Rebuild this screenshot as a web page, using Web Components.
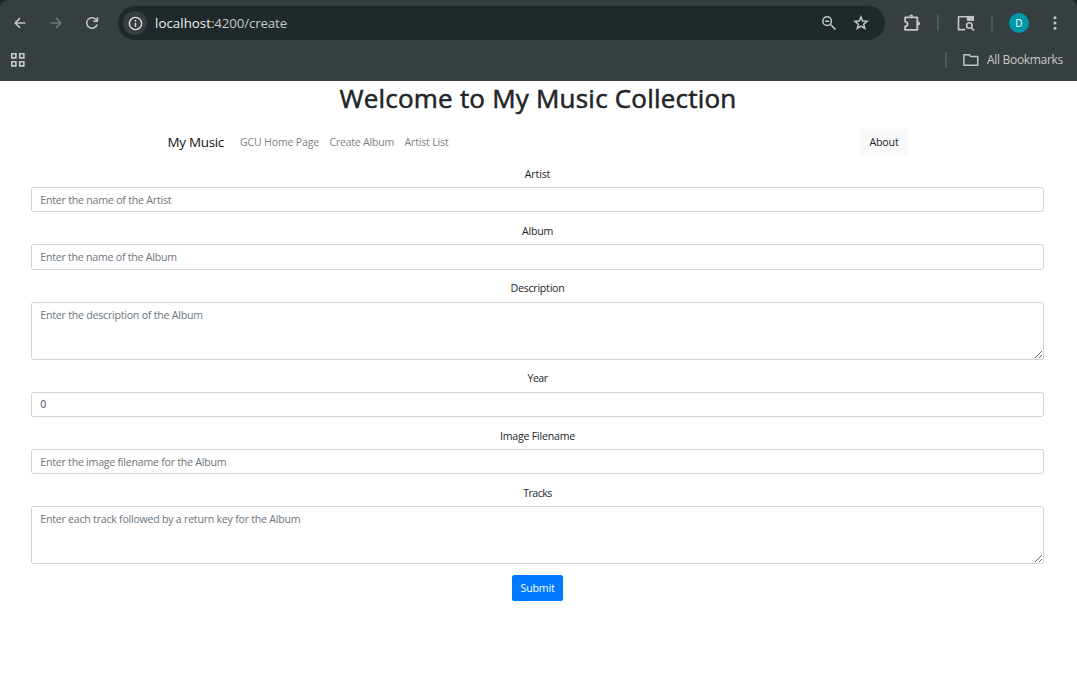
<!DOCTYPE html>
<html lang="en">
<head>
<meta charset="utf-8">
<title>My Music</title>
<style>
body{margin:0;background:#fff;color:#212529;font:10.6px/16px "Open Sans","Noto Sans",sans-serif}
</style>
</head>
<body>
<browser-toolbar></browser-toolbar>
<music-page></music-page>
<script>
const ctx = document.createElement('canvas').getContext('2d');
function spacingFor(el, text, width) {
  const s = getComputedStyle(el);
  ctx.font = `${s.fontWeight} ${s.fontSize} ${s.fontFamily}`;
  return (width - ctx.measureText(text).width) / text.length + 'px';
}
function define(name, html, ready) {
  customElements.define(name, class extends HTMLElement {
    connectedCallback() {
      if (this.shadowRoot) return;
      const t = document.createElement('template');
      t.innerHTML = html;
      this.attachShadow({mode: 'open'}).append(t.content.cloneNode(true));
      if (ready) ready(this, this.shadowRoot);
    }
  });
}

// Text tracked so that it takes the width given in "w".
define('fit-text', `<style>:host{display:inline-block;white-space:nowrap}</style><slot></slot>`, el => {
  const w = +el.getAttribute('w');
  el.style.width = w + 'px';
  el.style.letterSpacing = spacingFor(el, el.textContent, w);
});

define('form-field', `<style>
:host{display:block;margin-bottom:10.67px}
label{display:block;text-align:center;margin-bottom:5.33px;height:16px;color:#212529}
input,textarea{display:block;box-sizing:border-box;width:100%;margin:0;border:1px solid #ced4da;border-radius:2.6px;background:#fff;color:#495057;font:inherit;padding:0 8px 0 8.3px;outline:0}
input{height:25.33px}
textarea{height:58px;padding-top:4px;resize:vertical}
::placeholder{color:#6c757d;opacity:1}
</style><label><slot></slot></label>`, (el, root) => {
  const f = document.createElement(el.hasAttribute('multiline') ? 'textarea' : 'input');
  const hint = el.getAttribute('hint') || '';
  f.placeholder = hint;
  f.value = el.getAttribute('value') || '';
  root.append(f);
  if (hint) f.style.letterSpacing = spacingFor(f, hint, +el.getAttribute('w'));
});

define('app-button', `<style>
:host{display:block;flex:none}
button{display:block;box-sizing:border-box;width:100%;height:26px;border:0;border-radius:2.6px;padding:0;font:inherit;color:#212529;background:#f8f9fa;text-align:center}
:host([primary]) button{background:#007bff;color:#fff}
</style><button><slot></slot></button>`);

define('nav-bar', `<style>
:host{display:flex;align-items:center;height:26px;padding:0 169px 0 167.5px;margin-top:15px}
.brand{font-size:13.4px;color:#111;margin-right:16px}
nav{display:flex;gap:10.5px;color:#7f7f7f;flex:1}
app-button{width:48px}
</style>
<fit-text class="brand" w="56.5">My Music</fit-text>
<nav><fit-text w="79">GCU Home Page</fit-text><fit-text w="64.5">Create Album</fit-text><fit-text w="44">Artist List</fit-text></nav>
<app-button><fit-text w="29">About</fit-text></app-button>`);

define('music-page', `<style>
:host{display:block;padding-top:1px}
h1{margin:0;height:32px;line-height:32px;font-size:26px;font-weight:500;-webkit-text-stroke:.55px #212529;text-align:center;padding-right:1px}
form{padding:0 33px 0 31px;margin-top:10.72px}
app-button.submit{width:51px;margin:0 auto}
</style>
<h1><fit-text w="397">Welcome to My Music Collection</fit-text></h1>
<nav-bar></nav-bar>
<form>
<form-field hint="Enter the name of the Artist" w="131"><fit-text w="25.5">Artist</fit-text></form-field>
<form-field hint="Enter the name of the Album" w="136.5"><fit-text w="31">Album</fit-text></form-field>
<form-field multiline hint="Enter the description of the Album" w="162.5"><fit-text w="54">Description</fit-text></form-field>
<form-field value="0"><fit-text w="20">Year</fit-text></form-field>
<form-field hint="Enter the image filename for the Album" w="186"><fit-text w="75">Image Filename</fit-text></form-field>
<form-field multiline hint="Enter each track followed by a return key for the Album" w="260"><fit-text w="28.5">Tracks</fit-text></form-field>
<app-button primary class="submit"><fit-text w="34">Submit</fit-text></app-button>
</form>`);

const paths = {
  back: '<path d="M19 12H6M12 5.500 5.500 12l6.500 6.500"/>',
  forward: '<path d="M5 12h13M12 5.500 18.500 12 12 18.500"/>',
  reload: '<path d="M18.700 14A7 7 0 1 1 17 7.100L19 9M19.200 4v5.500h-5.700"/>',
  info: '<circle cx="12" cy="12" r="8.700"/><path d="M12 11v5.500M12 7v2"/>',
  zoom: '<circle cx="9.500" cy="9.500" r="5.700"/><path d="m13.700 13.700 6.800 6.800M6.800 9.500h5.400"/>',
  star: '<path stroke-linejoin="miter" d="m12 4 2.250 5.300 5.750.5-4.400 3.800 1.350 5.700L12 16.300l-4.950 3 1.350-5.700L4 9.800l5.750-.5z"/>',
  puzzle: '<path d="M4.500 5.800H17.800V19.500H4.500V15.800c3.600-.6 3.600-4.700 0-5.300z"/><path d="M9 5a2.200 2.200 0 0 1 4.400 0zM18.600 10.300a2.200 2.200 0 0 1 0 4.400z" fill="currentColor" stroke="none"/>',
  tabsearch: '<path d="M11 20H3V4.500H20.500V9"/><path d="M13 3.500h8.500v6H13z" fill="currentColor" stroke="none"/><circle cx="16" cy="15" r="3.300"/><path d="m18.300 17.500 3.400 3.500"/>',
  more: '<g fill="currentColor" stroke="none"><circle cx="12" cy="5" r="2"/><circle cx="12" cy="12" r="2"/><circle cx="12" cy="19" r="2"/></g>',
  apps: '<path stroke-linejoin="miter" stroke-width="2.200" d="M3.700 3.700h5.500v5.500H3.700zM14.300 3.700h5.500v5.500h-5.500zM3.700 14.300h5.500v5.500H3.700zM14.300 14.300h5.500v5.500h-5.500z"/>',
  folder: '<path d="M2.500 5H9.500l2 2.300H21V19H2.500z"/>'
};
define('tool-icon', `<style>:host{display:block;flex:none;width:18px;height:18px;color:#c4c7c5}svg{display:block;width:100%;height:100%;fill:none;stroke:currentColor;stroke-width:2;stroke-linejoin:round}</style><svg viewBox="0 0 24 24"></svg>`, (el, root) => {
  root.querySelector('svg').innerHTML = paths[el.getAttribute('name')];
});

define('browser-toolbar', `<style>
:host{display:block;box-sizing:border-box;height:81px;background:#202729;font-family:"Open Sans","Noto Sans",sans-serif}
.bar{box-sizing:border-box;height:81px;background:#373e41;border-bottom:1px solid #41373e;border-radius:8px 8px 0 0}
.row{display:flex;align-items:center;height:34px;padding:6px 13px 0 11px}
.space{flex:1}
.omni{display:flex;align-items:center;box-sizing:border-box;width:767px;height:34px;margin-left:18px;border-radius:17px;background:#1f282a;padding:0 15px 0 5px;font-size:13.3px;color:#c7cac9}
.info{display:grid;place-items:center;width:24px;height:24px;border-radius:50%;background:#373e41;margin-right:8px}
.info tool-icon{width:17px;height:17px;color:#e3e3e3}
.host{color:#eef0ef}
.sep{width:2px;height:16px;background:#505759}
.avatar{width:20px;height:20px;border-radius:50%;background:#0097a7;color:#fff;font-size:10px;line-height:20px;text-align:center;margin:0 17px 0 16px}
.marks{height:40px;padding:0 14px 0 9px;font-size:12px;color:#c7cac9}
.marks .sep{margin-right:15px}
.marks tool-icon{margin-right:7px}
</style>
<div class="bar">
<div class="row">
<tool-icon name="back"></tool-icon><tool-icon name="forward" style="color:#747a7b;margin-left:18px"></tool-icon><tool-icon name="reload" style="margin-left:18px;margin-right:-1px"></tool-icon>
<div class="omni"><div class="info"><tool-icon name="info"></tool-icon></div><fit-text class="host" w="56">localhost</fit-text><fit-text w="76">:4200/create</fit-text><span class="space"></span><tool-icon name="zoom" style="margin-right:14px"></tool-icon><tool-icon name="star"></tool-icon></div>
<tool-icon name="puzzle" style="margin:0 14px 0 16px;width:22px;height:22px"></tool-icon><span class="sep"></span>
<tool-icon name="tabsearch" style="margin:0 15.500px 0 16.500px;width:20px;height:20px"></tool-icon><span class="sep"></span>
<div class="avatar">D</div><tool-icon name="more"></tool-icon>
</div>
<div class="row marks"><tool-icon name="apps"></tool-icon><span class="space"></span><span class="sep"></span><tool-icon name="folder"></tool-icon><fit-text w="76">All Bookmarks</fit-text></div>
</div>`);
</script>
</body>
</html>
